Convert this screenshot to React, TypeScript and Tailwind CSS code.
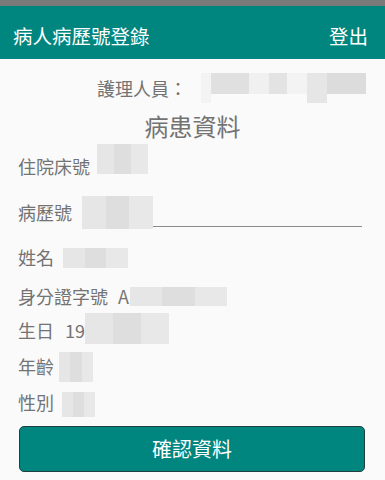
const font = { fontFamily: '"Noto Sans CJK TC", "Noto Sans", sans-serif' }

function Blur({ className }: { className: string }) {
  return <div className={`inline-flex ${className}`}>
    <div className="flex-1 bg-[#e6e6e6]" />
    <div className="flex-1 bg-[#dedede]" />
    <div className="flex-1 bg-[#e8e8e8]" />
  </div>
}

function Row({ label, children, className }: { label: string; children?: React.ReactNode; className: string }) {
  return (
    <div className={`flex items-center text-[18px] text-[#737373] ${className}`}>
      <span>{label}</span>
      {children}
    </div>
  )
}

export default function App() {
  return (
    <div className="w-[385px] h-[480px] bg-[#fafafa] flex flex-col overflow-hidden" style={font}>
      <div className="h-[6px] bg-[#7a7a7a]" />
      <div className="h-[53px] bg-[#00857f] flex items-center justify-between pl-[13px] pr-[17px] pt-[6px] text-white text-[19.5px]">
        <span>病人病歷號登錄</span>
        <span>登出</span>
      </div>

      <div className="flex items-center h-[30px] mt-[14px] pl-[97px] text-[18px] text-[#737373]">
        <span>護理人員：</span>
        <div className="ml-[14px] flex items-start h-[30px] w-[165px]">
          <div className="w-[10px] h-[30px] bg-[#f3f3f3]" />
          <div className="w-[38px] h-[21px] bg-[#e0e0e0]" />
          <div className="w-[20px] h-[21px] bg-[#f0f0f0]" />
          <div className="w-[18px] h-[21px] bg-[#e3e3e3]" />
          <div className="w-[20px] h-[21px] bg-[#f3f3f3]" />
          <div className="w-[20px] h-[30px] bg-[#e6e6e6]" />
          <div className="w-[39px] h-[21px] bg-[#dcdcdc]" />
        </div>
      </div>

      <div className="text-center text-[24px] text-[#737373] leading-none mt-[11px]">病患資料</div>

      <div className="px-[18px] mt-[4px]">
        <Row label="住院床號" className="h-[48px]">
          <Blur className="ml-[7px] w-[51px] h-[30px] -mt-[14px]" />
        </Row>
        <Row label="病歷號" className="h-[44px]">
          <Blur className="ml-[10px] w-[71px] h-[33px]" />
        </Row>
        <div className="ml-[68px] mr-[5px] h-px bg-[#8a8a8a] -mt-[8px]" />
        <Row label="姓名" className="h-[39px] mt-[11px]">
          <Blur className="ml-[9px] w-[65px] h-[20px]" />
        </Row>
        <Row label="身分證字號" className="h-[38px]">
          <span className="ml-[10px]">A</span>
          <Blur className="ml-[1px] w-[97px] h-[19px]" />
        </Row>
        <Row label="生日" className="h-[30px]">
          <span className="ml-[11px]">19</span>
          <Blur className="w-[84px] h-[31px] -translate-y-[2px]" />
        </Row>
        <Row label="年齡" className="h-[43px]">
          <Blur className="ml-[5px] w-[34px] h-[30px]" />
        </Row>
        <Row label="性別" className="h-[29px]">
          <Blur className="ml-[8px] w-[33px] h-[25px] translate-y-[2px]" />
        </Row>
      </div>

      <button className="ml-[19px] mr-[20px] mt-[9px] h-[46px] rounded-[5px] border border-[#1f3f3d] bg-[#00857f] text-white text-[20px]">
        確認資料
      </button>
    </div>
  )
}
